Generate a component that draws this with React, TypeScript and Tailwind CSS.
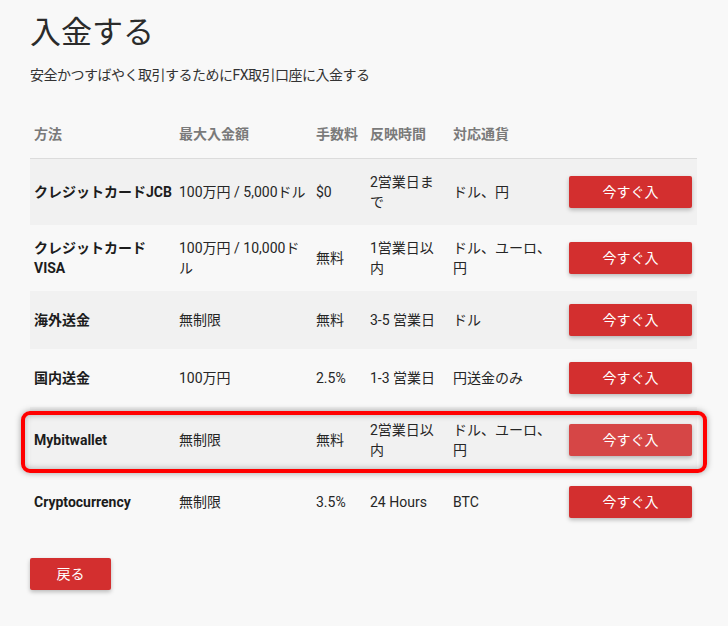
import React from 'react'

interface DepositMethod {
  name: string
  max: string
  fee: string
  time: string
  currency: string
  highlight?: boolean
}

const methods: DepositMethod[] = [
  { name: 'クレジットカードJCB', max: '100万円 / 5,000ドル', fee: '$0', time: '2営業日まで', currency: 'ドル、円' },
  { name: 'クレジットカードVISA', max: '100万円 / 10,000ドル', fee: '無料', time: '1営業日以内', currency: 'ドル、ユーロ、円' },
  { name: '海外送金', max: '無制限', fee: '無料', time: '3-5 営業日', currency: 'ドル' },
  { name: '国内送金', max: '100万円', fee: '2.5%', time: '1-3 営業日', currency: '円送金のみ' },
  { name: 'Mybitwallet', max: '無制限', fee: '無料', time: '2営業日以内', currency: 'ドル、ユーロ、円', highlight: true },
  { name: 'Cryptocurrency', max: '無制限', fee: '3.5%', time: '24 Hours', currency: 'BTC' },
]

const cols = 'grid grid-cols-[145px_137px_54px_83px_116px_132px]'

function MethodRow({ method, index }: { method: DepositMethod; index: number }) {
  const striped = index % 2 === 0
  return (
    <div className={`relative ${cols} items-center py-[13px] ${striped ? 'bg-[#f1f1f1]' : ''}`}>
      {method.highlight && (
        <span className="pointer-events-none absolute top-[4px] bottom-0 -left-[9px] -right-[10px] rounded-[9px] border-4 border-[#ff0000] shadow-[0_0_6px_rgba(0,0,0,0.35),inset_0_0_6px_rgba(0,0,0,0.3)]" />
      )}
      <div className="pl-1 font-bold text-[#1c1c1c]">{method.name}</div>
      <div className="pl-1">{method.max}</div>
      <div className="pl-1">{method.fee}</div>
      <div className="pl-1 pr-2">{method.time}</div>
      <div className="pl-1 pr-2">{method.currency}</div>
      <div className="flex justify-end pr-[5px]">
        <button
          className={`h-8 w-[123px] rounded-[2px] text-white shadow-[0_2px_4px_rgba(0,0,0,0.25)] ${
            method.highlight ? 'bg-[#d64646]' : 'bg-[#d32f2f]'
          }`}
        >
          今すぐ入
        </button>
      </div>
    </div>
  )
}

export default function App() {
  return (
    <div className="min-h-[626px] bg-[#f8f8f8] px-[30px] pt-[14px] font-['Roboto','Noto_Sans_CJK_JP',sans-serif] text-[14px] leading-[20px] text-[#262626]">
      <h1 className="text-[31px] leading-[38px] text-[#2b2b2b]">入金する</h1>
      <p className="mt-[13px] tracking-[-0.5px] text-[#333]">安全かつすばやく取引するためにFX取引口座に入金する</p>

      <div className="mt-[34px] w-[667px]">
        <div className={`${cols} border-b border-[#dcdcdc] pb-[14px] pt-[5px] font-bold text-[#7a7a7a]`}>
          <div className="pl-1">方法</div>
          <div className="pl-1">最大入金額</div>
          <div className="pl-1">手数料</div>
          <div className="pl-1">反映時間</div>
          <div className="pl-1">対応通貨</div>
          <div />
        </div>
        {methods.map((m, i) => (
          <MethodRow key={m.name} method={m} index={i} />
        ))}
      </div>

      <button className="mt-[27px] h-8 w-[81px] rounded-[2px] bg-[#d32f2f] text-white shadow-[0_2px_4px_rgba(0,0,0,0.25)]">
        戻る
      </button>
    </div>
  )
}
